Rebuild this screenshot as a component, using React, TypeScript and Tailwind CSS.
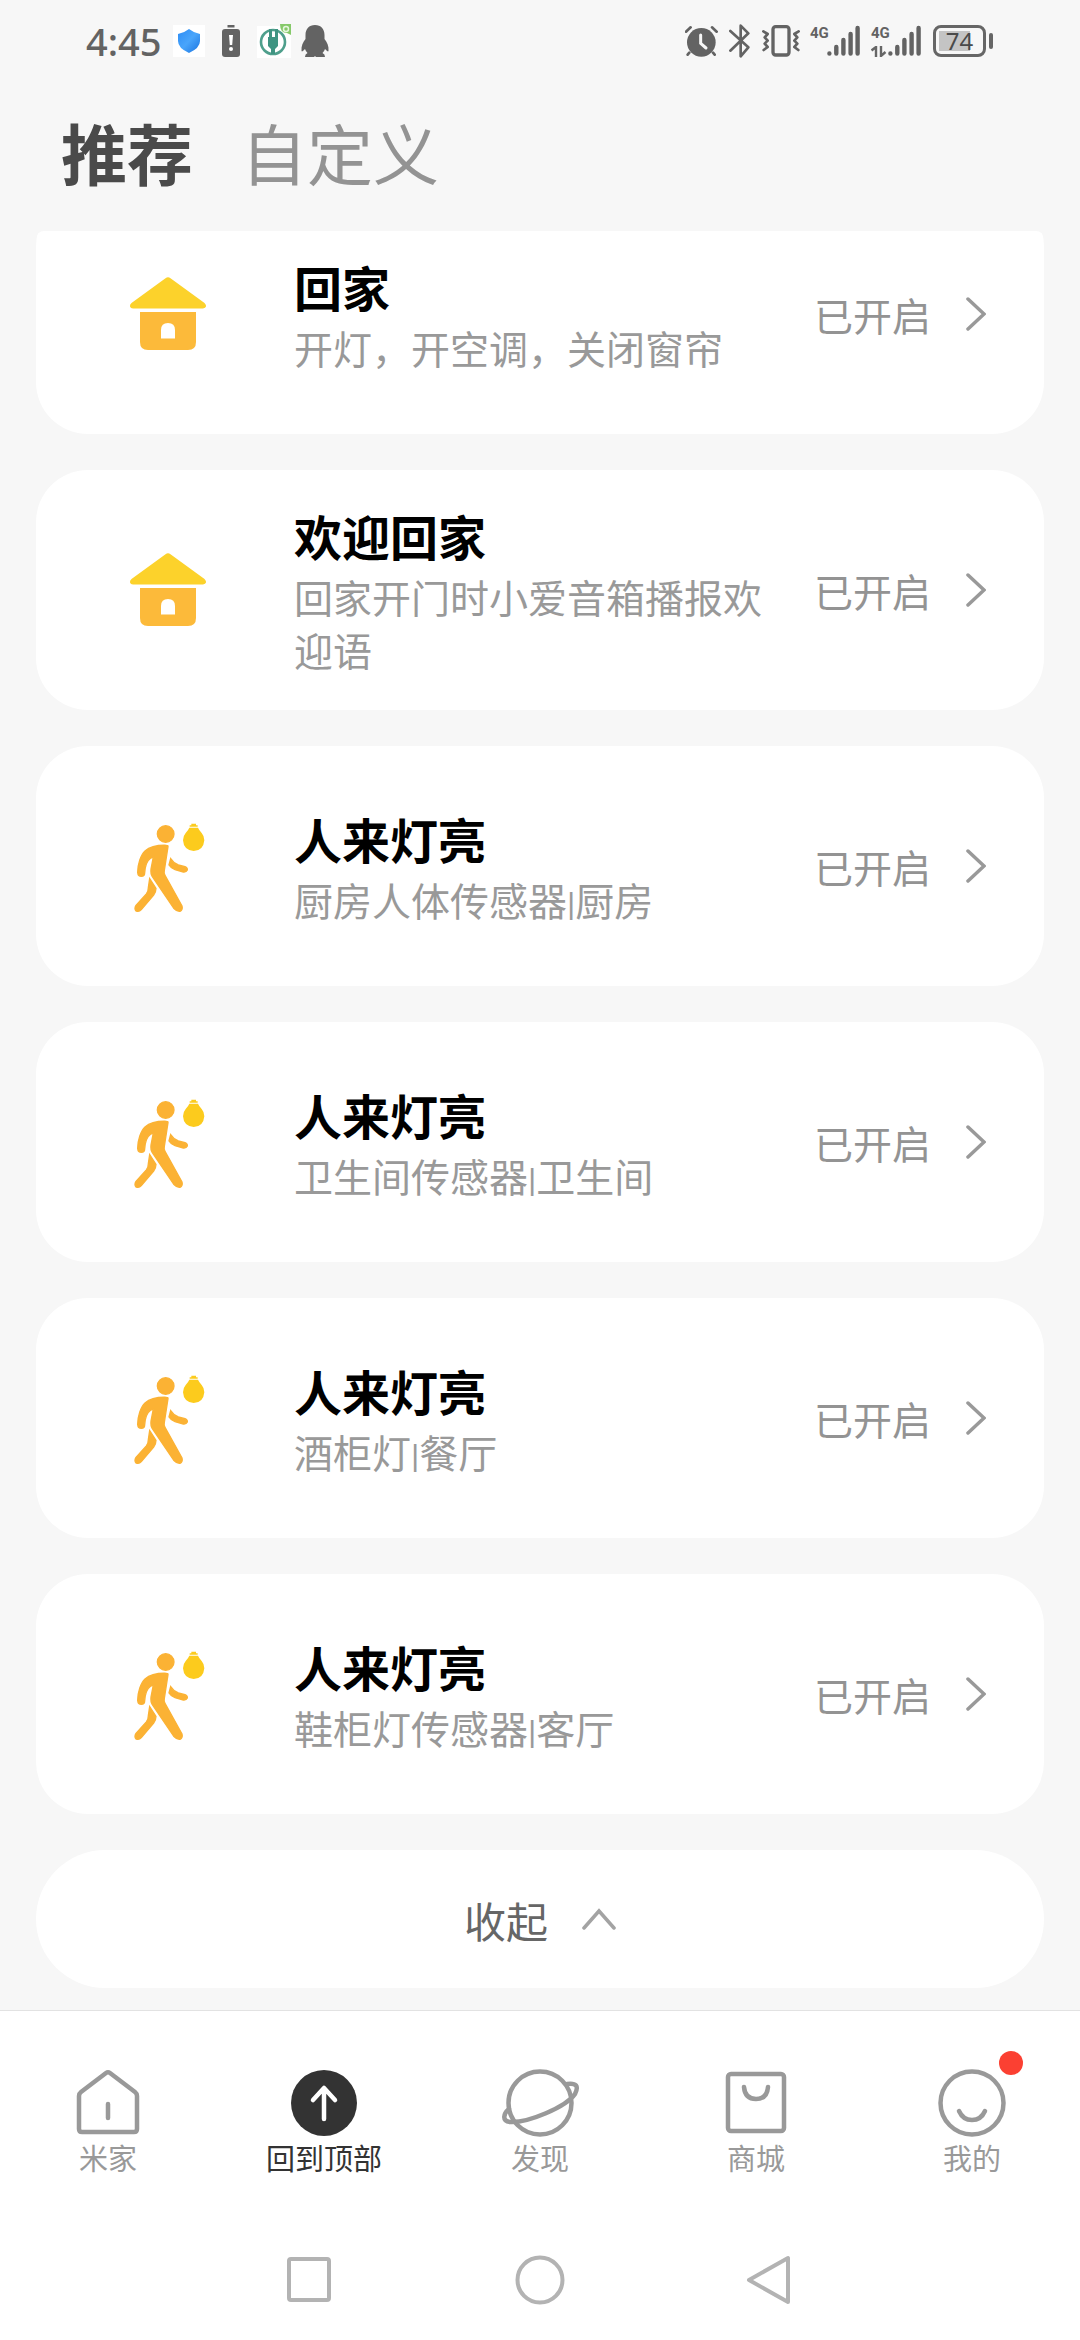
import type { ReactNode } from "react";

type Scene = { icon: "house" | "walker"; title: string; detail: string };

const scenes: Scene[] = [
  { icon: "house", title: "回家", detail: "开灯，开空调，关闭窗帘" },
  { icon: "house", title: "欢迎回家", detail: "回家开门时小爱音箱播报欢迎语" },
  { icon: "walker", title: "人来灯亮", detail: "厨房人体传感器|厨房" },
  { icon: "walker", title: "人来灯亮", detail: "卫生间传感器|卫生间" },
  { icon: "walker", title: "人来灯亮", detail: "酒柜灯|餐厅" },
  { icon: "walker", title: "人来灯亮", detail: "鞋柜灯传感器|客厅" },
];

function HouseIcon() {
  return (
    <svg className="h-[96px] w-[88px]" viewBox="124 266 88 96" aria-hidden="true">
      <path d="M165.5 278.2q2.5-2 5 0L204.500 303q2 2 1.500 3.500t-3 2H133q-2.500 0-3-2t1.500-3.500z" fill="#fcd22b" />
      <path
        fillRule="evenodd"
        d="M140 312h56v30q0 8-8 8h-40q-8 0-8-8zM161 338.500h14V330q0-7-7-7t-7 7z"
        fill="#fcba3a"
      />
    </svg>
  );
}

function WalkerIcon() {
  return (
    <svg className="h-[96px] w-[88px]" viewBox="72 85 264 288" aria-hidden="true">
      <g fill="#fbb234" stroke="#fbb234" strokeWidth="4">
        <circle cx="197" cy="133" r="25" />
        <path d="M204 171Q205 167 200 167C174 166 150 171 135 184C122 196 113 225 113 248Q114 260 124 260Q134 260 134 250C135 232 139 214 151 206L160 202L153 238Q151 252 158 262L222 357Q230 366 240 365Q249 361 246 349L195 257Q191 250 193 242Z" />
        <path d="M149 267L168 296Q168 307 161 316L124 360Q117 368 108 364Q102 357 108 347L139 313Q145 305 145 294Z" />
        <path d="M212 207Q221 221 235 226L255 231Q263 235 262 241Q259 248 250 247L225 240Q213 236 207 226Z" />
      </g>
      <g fill="#fccb1d">
        <path d="M268 114h26Q297 121 305 130Q313 139 313 152Q310 184 281 184Q251 182 249 152Q249 139 257 130Q265 121 268 114Z" />
        <path d="M274 102h14v5h5v4h-24v-4h5z" />
      </g>
    </svg>
  );
}

function SceneCard({ icon, title, detail }: Scene) {
  const [name, room] = detail.split("|");
  return (
    <button type="button" className="flex min-h-[240px] w-full items-center rounded-[52px] bg-white pr-[58px] text-left">
      <span className="w-[258px] shrink-0 pl-[88px]">{icon === "house" ? <HouseIcon /> : <WalkerIcon />}</span>
      <span className="flex min-w-0 flex-1 flex-col gap-1 pr-6">
        <span className="text-[48px] leading-[62px] font-bold text-black">{title}</span>
        <span className="text-[39px] leading-[53px] text-[#999999]">
          {name}
          {room && <span className="font-['Roboto',sans-serif] text-[34px] leading-none">|</span>}
          {room}
        </span>
      </span>
      <span className="shrink-0 text-[39px] leading-[53px] text-[#939393]">已开启</span>
      <svg className="ml-[35px] h-[36px] w-[20px] shrink-0" viewBox="0 0 20 36" aria-hidden="true">
        <path d="M2 3l16 15L2 33" fill="none" stroke="#999" strokeWidth="3.500" strokeLinecap="round" />
      </svg>
    </button>
  );
}

function Signal({ arrows }: { arrows?: boolean }) {
  return (
    <span className="flex h-8">
      <span className="flex w-[17px] flex-col justify-between">
        <span className="font-['Liberation_Sans_Narrow','Roboto',sans-serif] text-[15px] leading-4 font-bold">4G</span>
        {arrows && (
          <svg className="h-[11px] w-[16px]" viewBox="0 0 16 11" fill="none" stroke="#666" strokeWidth="2.400" aria-hidden="true">
            <path d="M0.500 4.500L5 1v10M10 0v10l4.500-4" />
          </svg>
        )}
      </span>
      <svg className="h-8 w-[33px]" viewBox="0 0 33 32" stroke="#636363" strokeWidth="4.400" strokeLinecap="round" aria-hidden="true">
        <path d="M2.400 28.500v.1M9.300 22v6.500M16.400 15v13.500M23.600 9v19.500M30.600 3v25.500" />
      </svg>
    </span>
  );
}

function StatusBar() {
  return (
    <div className="flex h-[80px] items-center pt-[2px] pr-[87px] pl-[86px] text-[#636363]">
      <span className="w-[87px] font-['Noto_Sans',sans-serif] text-[38px] leading-[40px] font-medium">4:45</span>
      <svg className="h-8 w-[32px] bg-white" viewBox="0 0 32 32" aria-label="安全">
        <defs>
          <linearGradient id="shield" x2="1" y2="1">
            <stop offset="0" stopColor="#2d8cf5" />
            <stop offset="0.5" stopColor="#49a5fb" />
            <stop offset="1" stopColor="#1a73e0" />
          </linearGradient>
        </defs>
        <path d="M16 4q5 4 11 5v7q0 7-11 12Q5 23 5 16V9q6-1 11-5z" fill="url(#shield)" />
      </svg>
      <svg className="ml-[17px] h-8 w-[18px]" viewBox="0 0 18 32" aria-label="电量低">
        <path d="M5.500 0h7v2.500h-7z" fill="#636363" />
        <rect y="4" width="18" height="28" rx="3" fill="#636363" />
        <path d="M7 10h4l-.8 10H7.800z" fill="#fff" />
        <circle cx="9" cy="24" r="2" fill="#fff" />
      </svg>
      <svg className="ml-[17px] h-[34px] w-[34px]" viewBox="0 0 34 34" aria-label="充电">
        <path d="M0 2h34v32H0z" fill="#fff" />
        <circle cx="16" cy="18" r="12" fill="none" stroke="#4f9f8c" strokeWidth="2.600" />
        <path d="M11 13h10v9l-3 3v5h-4v-5l-3-3zM12 5h3v9h-3zM18 5h3v9h-3z" fill="#3f9482" />
        <path d="M23 0h11v11l-4-2q-7 0-7-9z" fill="#86c96a" />
        <circle cx="29" cy="5" r="2.500" fill="none" stroke="#e6f6de" strokeWidth="1.500" />
      </svg>
      <svg className="ml-[10px] h-8 w-[28px]" viewBox="0 0 28 32" fill="#636363" aria-label="QQ">
        <path d="M14 0C8 0 4.500 4 4.500 10v4C2 17 0 21 .5 26q.5 1.500 3.500-2 .8 2.500 2.500 4-2.500 1-2.500 4h9l1-1 1 1h9q0-3-2.500-4 1.700-1.500 2.500-4 3 3.500 3.500 2c.5-5-1.500-9-4-12v-4C23.500 4 20 0 14 0z" />
      </svg>
      <div className="ml-auto flex items-center">
        <svg className="h-8 w-[33px]" viewBox="75 72 99 96" fill="#636363" aria-label="闹钟">
          <circle cx="124" cy="124" r="43" />
          <path d="M78 92l14-13M156 79l14 13M88 155l-5 6M159 155l5 6" stroke="#636363" strokeWidth="8" strokeLinecap="round" />
          <path d="M122 102v25l16 14" fill="none" stroke="#f7f7f7" strokeWidth="9" strokeLinecap="round" />
        </svg>
        <svg className="ml-[11px] h-[34px] w-[21px]" viewBox="205 70 63 102" fill="none" stroke="#636363" strokeWidth="8" strokeLinecap="round" strokeLinejoin="round" aria-label="蓝牙">
          <path d="M209 91l54 49-23 27V75l23 23-54 52" />
        </svg>
        <svg className="ml-[12px] h-8 w-[38px]" viewBox="303 72 114 96" fill="none" stroke="#636363" strokeLinecap="round" strokeLinejoin="round" aria-label="振动">
          <rect x="336" y="77" width="48" height="85" rx="8" strokeWidth="10" />
          <path d="M307 91l13 8-9 10 9 10-9 9 9 10-12 9M413 91l-13 8 9 10-9 10 9 9-9 10 12 9" strokeWidth="8" />
        </svg>
        <span className="ml-[10px]"><Signal /></span>
        <span className="ml-[11px]"><Signal arrows /></span>
        <span className="ml-[12px] flex h-8 w-[53px] items-center justify-center rounded-[8px] border-[3px] border-[#666666] p-[3px]">
          <span className="flex h-full w-full items-center justify-center bg-linear-to-r from-[#c4c4c4] from-75% to-[#f7f7f7] to-75% font-['Noto_Sans',sans-serif] text-[24px] leading-[22px] text-[#4a4a4a]">74</span>
        </span>
        <span className="ml-[3px] h-[16px] w-[4px] rounded-sm bg-[#666666]" />
      </div>
    </div>
  );
}

function NavItem({ label, active, badge, children }: { label: string; active?: boolean; badge?: boolean; children: ReactNode }) {
  return (
    <a href="#" className={active ? "flex flex-1 flex-col items-center text-[#333333]" : "flex flex-1 flex-col items-center text-[#999999]"}>
      <span className="relative">
        <svg className="h-[68px] w-[80px]" viewBox="0 0 80 68" fill="none" stroke="currentColor" strokeWidth="4.500" strokeLinecap="round" strokeLinejoin="round" aria-hidden="true">
          {children}
        </svg>
        {badge && <span className="absolute -top-[18px] -right-[11px] h-6 w-6 rounded-full bg-[#fb4032]" />}
      </span>
      <span className="text-[29px] leading-[40px]">{label}</span>
    </a>
  );
}

export default function App() {
  return (
    <div className="flex min-h-screen flex-col bg-[#f7f7f7] font-['Noto_Sans_CJK_SC',sans-serif]">
      <StatusBar />
      <header className="flex h-[151px] items-start gap-[48px] pt-[23px] pl-[61px] text-[66px] leading-[96px]">
        <button type="button" className="font-bold text-[#4a4a4a]">推荐</button>
        <button type="button" className="text-[#939393]">自定义</button>
      </header>
      <main className="mx-9 overflow-hidden rounded-t-[8px] pb-[22px]">
        <div className="-mt-[37px] flex flex-col gap-9">
          {scenes.map((scene) => (
            <SceneCard key={scene.detail} {...scene} />
          ))}
          <button type="button" className="flex h-[138px] items-center justify-center gap-[34px] rounded-full bg-white text-[42px] text-[#666666]">
            收起
            <svg className="h-[24px] w-[34px]" viewBox="0 0 34 24" aria-hidden="true">
              <path d="M2 21L17 4l15 17" fill="none" stroke="#a3a3a3" strokeWidth="3.500" strokeLinecap="round" />
            </svg>
          </button>
        </div>
      </main>
      <footer className="grow border-t border-[#e2e2e2] bg-white">
        <nav className="flex pt-[58px]">
          <NavItem label="米家">
            <path d="M38 4q2-1.500 4 0l25 19q2 1.500 2 4v33q0 3-3 3H14q-3 0-3-3V27q0-2.500 2-4zM40 35v14" />
          </NavItem>
          <NavItem label="回到顶部" active>
            <circle cx="40" cy="34" r="33" fill="#333" stroke="none" />
            <path d="M40 50V20M29 31l11-12 11 12" stroke="#fff" />
          </NavItem>
          <NavItem label="发现">
            <circle cx="40" cy="34" r="31.500" />
            <path d="M9 40C3 45 2 52 10 53C28 54 66 38 75 25Q81 13 67 15" />
          </NavItem>
          <NavItem label="商城">
            <rect x="12" y="5" width="56" height="57" rx="3" />
            <path d="M28 18Q29 30 40 30T52 18" />
          </NavItem>
          <NavItem label="我的" badge>
            <circle cx="40" cy="34" r="31.500" />
            <path d="M27 42Q31 51 40 51T53 42" />
          </NavItem>
        </nav>
        <div className="flex items-center justify-center gap-[181px] pt-[78px] pb-[34px]">
          <button type="button" aria-label="最近任务">
            <svg className="h-[50px] w-[50px]" viewBox="0 0 50 50" fill="none" stroke="#b3b3b3" strokeWidth="4"><rect x="5" y="4" width="40" height="41" rx="2" /></svg>
          </button>
          <button type="button" aria-label="主屏幕">
            <svg className="h-[50px] w-[50px]" viewBox="0 0 50 50" fill="none" stroke="#b3b3b3" strokeWidth="4"><circle cx="25" cy="25" r="22.500" /></svg>
          </button>
          <button type="button" aria-label="返回">
            <svg className="h-[50px] w-[50px]" viewBox="0 0 50 50" fill="none" stroke="#b3b3b3" strokeWidth="4" strokeLinejoin="round"><path d="M42 3v44L3 25z" /></svg>
          </button>
        </div>
      </footer>
    </div>
  );
}
